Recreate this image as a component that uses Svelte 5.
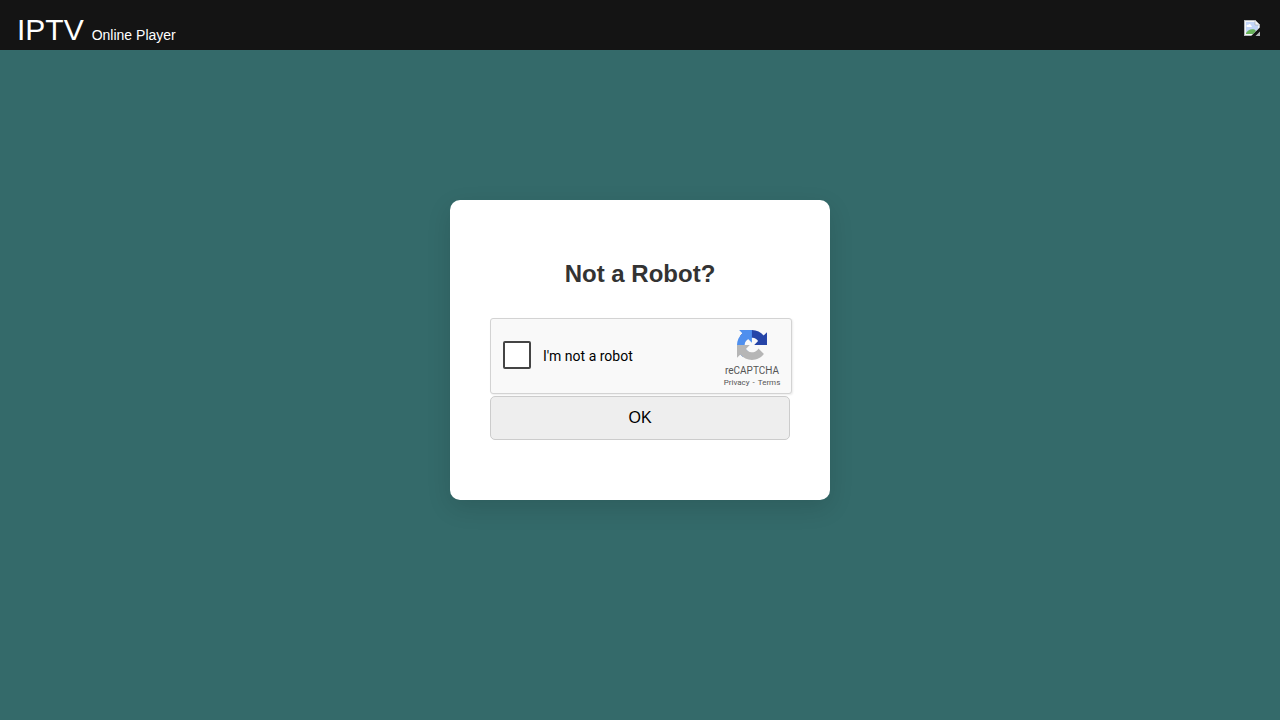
<script>
  let checked = $state(false);
</script>

<svelte:head>
  <title>IPTV Online Player</title>
</svelte:head>

<div class="page">
  <header>
    <a class="brand" href="#home">
      <span class="name">IPTV</span>
      <span class="tagline">Online Player</span>
    </a>
    <a class="flag" href="#language" aria-label="Language">
      <svg width="16" height="16" viewBox="0 0 16 16" aria-hidden="true">
        <path d="M0 0h11l5 5v3L8 16H0z" fill="#b4b8bb" />
        <path d="M1 1h10v4h4v3l-7 7H1z" fill="#f4f6f8" />
        <path d="M2 2h9v3h3v4l-5 5H2z" fill="#c3d6f8" />
        <path d="M11 0l5 5h-5z" fill="#f4f5f6" stroke="#a6a9ac" stroke-width=".6" />
        <path d="M3 7c-1.400-1 .1-2.600 1.200-2 .7-1.700 2.700-1 2.700.4 1.400.1 1.300 1.600.3 1.600z" fill="#fff" />
        <path d="M2 14v-1c2-3.200 5-4.500 8.500-3.500L12 11l-3 3z" fill="#69b35a" />
        <path d="M16 7.600v3.400L11 16H7.200z" fill="#141414" />
        <path d="M16 11.500V16h-4.500z" fill="#b4b8bb" />
      </svg>
    </a>
  </header>

  <main>
    <form class="card" onsubmit={(event) => event.preventDefault()}>
      <h2>Not a Robot?</h2>
      <div class="captcha">
        <input id="human" type="checkbox" bind:checked />
        <label for="human">I'm not a robot</label>
        <div class="badge">
          <svg width="30" height="30" viewBox="0 0 64 64" aria-hidden="true">
            <path fill="#2645a8" d="M64 31.955a33.1 33.1 0 0 0-.033-1.37V4.687l-7.16 7.16C50.948 4.674 42.033.093 32.05.093c-10.4 0-19.622 4.96-25.458 12.64l11.736 11.86a15.55 15.55 0 0 1 4.754-5.334c2.05-1.6 4.952-2.906 8.968-2.906.485 0 .86.057 1.135.163 4.976.393 9.288 3.14 11.828 7.124l-8.307 8.307L64 31.953" />
            <path fill="#4f8fee" d="M31.862.094a33.1 33.1 0 0 0-1.37.033H4.594l7.16 7.16C4.58 13.147 0 22.06 0 32.046c0 10.4 4.96 19.622 12.64 25.458L24.5 45.768a15.55 15.55 0 0 1-5.334-4.754c-1.6-2.05-2.906-4.952-2.906-8.968 0-.485.057-.86.163-1.135.393-4.976 3.14-9.288 7.124-11.828l8.307 8.307L31.86.095" />
            <path fill="#b6b6b6" d="M.001 32.045a33.1 33.1 0 0 0 .033 1.37v25.898l7.16-7.16c5.86 7.173 14.774 11.754 24.76 11.754 10.4 0 19.622-4.96 25.458-12.64l-11.736-11.86a15.55 15.55 0 0 1-4.754 5.334c-2.05 1.6-4.952 2.906-8.968 2.906-.485 0-.86-.057-1.135-.163-4.976-.393-9.288-3.14-11.828-7.124l8.307-8.307c-10.522.04-22.4.066-27.295-.005" />
          </svg>
          <span class="product">reCAPTCHA</span>
          <span class="links"><a href="#privacy">Privacy</a><span aria-hidden="true">-</span><a href="#terms">Terms</a></span>
        </div>
      </div>
      <button type="submit">OK</button>
    </form>
  </main>
</div>

<style>
  :global(body) {
    margin: 0;
    background: #346a6a;
  }

  .page {
    display: flex;
    flex-direction: column;
    min-height: 100vh;
    font-family: "Liberation Sans", Arial, sans-serif;
  }

  header {
    box-sizing: border-box;
    display: flex;
    justify-content: space-between;
    align-items: center;
    height: 50px;
    padding: 6px 20px 0 17px;
    background: #141414;
  }

  .brand {
    display: flex;
    align-items: baseline;
    gap: 8px;
    padding-top: 4px;
    color: #fff;
    text-decoration: none;
  }

  .name {
    font-size: 30px;
    line-height: 40px;
  }

  .tagline {
    font-size: 14px;
  }

  .flag {
    display: flex;
  }

  main {
    flex: 1;
    display: flex;
    justify-content: center;
    align-items: flex-start;
    padding: 150px 20px;
  }

  .card {
    box-sizing: border-box;
    width: 100%;
    max-width: 380px;
    padding: 60px 40px;
    border-radius: 10px;
    background: #fff;
    box-shadow: 0 8px 24px rgba(0, 0, 0, 0.12);
  }

  h2 {
    margin: 0 0 30px;
    color: #333;
    font-size: 24px;
    line-height: 28px;
    text-align: center;
  }

  .captcha {
    box-sizing: border-box;
    display: flex;
    align-items: center;
    gap: 12px;
    height: 76px;
    margin: 0 -2px 2px 0;
    padding: 0 8px 0 12px;
    border: 1px solid #d3d3d3;
    border-radius: 3px;
    background: #f9f9f9;
    box-shadow: 1px 1px 2px rgba(0, 0, 0, 0.08);
    font-family: Roboto, sans-serif;
  }

  input {
    appearance: none;
    box-sizing: border-box;
    flex: none;
    width: 28px;
    height: 28px;
    margin: 0 0 2px;
    border: 2px solid #444;
    border-radius: 2px;
    background: #fff;
  }

  input:checked {
    background: #4285f4;
  }

  label {
    flex: 1;
    color: #000;
    font-size: 14px;
    line-height: 17px;
  }

  .badge {
    display: flex;
    flex-direction: column;
    align-items: center;
    width: 62px;
    padding-top: 6px;
    color: #555;
  }

  .product {
    margin-top: 4px;
    font-size: 10px;
    line-height: 14px;
  }

  .links {
    display: flex;
    gap: 3px;
    font-size: 8px;
    line-height: 10px;
  }

  .links a {
    color: inherit;
    text-decoration: none;
  }

  button {
    display: block;
    box-sizing: border-box;
    width: 100%;
    height: 44px;
    padding: 0;
    border: 1px solid #ccc;
    border-radius: 5px;
    background: #eee;
    color: #000;
    font-family: inherit;
    font-size: 16px;
  }
</style>
